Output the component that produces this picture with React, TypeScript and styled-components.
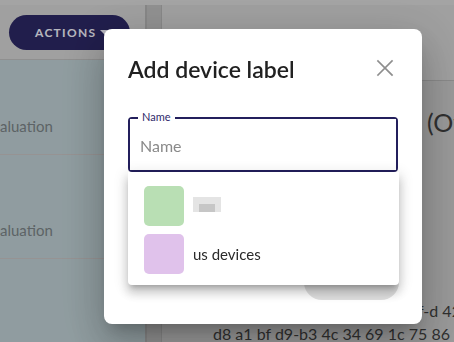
import React from 'react'
import styled, { createGlobalStyle } from 'styled-components'

const GlobalStyle = createGlobalStyle`
    html, body {
        margin: 0;
        padding: 0;
        width: 100%;
        height: 100%;
        overflow: hidden;
        font-family: Lato, "Noto Sans", sans-serif;
    }
    * {
        box-sizing: border-box;
    }
`

interface Label {
    color: string,
    name: string,
    hidden?: boolean
}

const labels: Label[] = [
    { color: '#b9dfb4', name: '', hidden: true },
    { color: '#e0c2eb', name: 'us devices' },
]

const App: React.FC = () => {
    return (
        <>
            <GlobalStyle />
            <StyledPage>
                <div className='left-col'>
                    <div className='topbar'>
                        <button className='actions'>Actions <span className='caret' /></button>
                    </div>
                    <div className='panel'>
                        <div className='row'>aluation</div>
                        <div className='row'>aluation</div>
                        <div className='row' />
                    </div>
                </div>
                <div className='strip' />
                <div className='right-col'>
                    <div className='header' />
                    <h2 className='device-title'>Evaluation device (Offline)</h2>
                    <div className='spacer' />
                    <div className='uuid'>
                        <p>5e 0c 7b 11-90 3a 8f 2c 6b 1f-d 42 c0</p>
                        <p>d8 a1 bf d9-b3 4c 34 69 1c 75 86 -</p>
                    </div>
                </div>
            </StyledPage>
            <Overlay />
            <StyledModal>
                <div className='modal-head'>
                    <h1>Add device label</h1>
                    <button className='close' aria-label='close'>
                        <svg width='28' height='28' viewBox='0 0 24 24' fill='none' stroke='#8e8e8e' strokeWidth='1.5' strokeLinecap='square'>
                            <path d='M18 6 6 18M6 6l12 12' />
                        </svg>
                    </button>
                </div>
                <div className='field'>
                    <label>Name</label>
                    <input placeholder='Name' />
                </div>
                <div className='modal-actions'>
                    <button className='save'>Add</button>
                </div>
                <StyledMenu>
                    {labels.map((l, i) => (
                        <div className='item' key={i}>
                            <span className='swatch' style={{ background: l.color }} />
                            {l.hidden ? <span className='redacted' /> : <span>{l.name}</span>}
                        </div>
                    ))}
                </StyledMenu>
            </StyledModal>
        </>
    )
}

const StyledPage = styled.div`
    display: flex;
    width: 100vw;
    height: 100vh;
    background: #c0c0c0;
    border-top: 5px solid #cecece;

    .left-col {
        width: 147px;
        display: flex;
        flex-direction: column;
        border-right: 2px solid #a9a9a9;
    }

    .topbar {
        height: 55px;
        flex-shrink: 0;
        background: #c8c8c8;
        border-bottom: 1px solid #b3b3b3;
        padding: 10px 0 0 9px;
    }

    .actions {
        width: 121px;
        height: 35px;
        border: none;
        border-radius: 18px;
        background: #2a2660;
        color: #e4e4ee;
        font-family: Lato, sans-serif;
        font-weight: 700;
        font-size: 12px;
        letter-spacing: 1.3px;
        text-transform: uppercase;
        display: flex;
        align-items: center;
        padding-left: 26px;
        gap: 4px;
    }

    .caret {
        width: 0;
        height: 0;
        border-left: 5px solid transparent;
        border-right: 5px solid transparent;
        border-top: 5px solid #e4e4ee;
    }

    .panel {
        flex: 1;
        min-height: 0;
        overflow: hidden;
        background: #b4c4c8;
    }

    .row {
        height: 104px;
        display: flex;
        align-items: flex-end;
        padding-bottom: 18px;
        font-size: 15px;
        line-height: 20px;
        color: #757c80;
        border-bottom: 1px solid #bcb8b8;
    }

    .row:first-child {
        height: 95px;
    }

    .strip {
        width: 15px;
        background: #b6b6b6;
        border-right: 1px solid #aaaaaa;
    }

    .right-col {
        flex: 1;
        display: flex;
        flex-direction: column;
        overflow: hidden;
        color: #3c3c3c;
    }

    .header {
        height: 76px;
        flex-shrink: 0;
        background: #c8c8c8;
        border-bottom: 1px solid #acacac;
    }

    .device-title {
        margin: 26px 0 0 67px;
        font-size: 25px;
        font-weight: 400;
        white-space: nowrap;
    }

    .spacer {
        flex: 1;
    }

    .uuid {
        padding-left: 51px;
        margin-bottom: -3px;

        p {
            margin: 0;
            font-size: 16px;
            line-height: 23px;
            white-space: nowrap;
        }
    }
`

const Overlay = styled.div`
    position: fixed;
    inset: 0;
    background: rgba(0, 0, 0, 0.2);
`

const StyledModal = styled.div`
    position: fixed;
    left: 104px;
    top: 29px;
    width: 318px;
    height: 295px;
    background: #fff;
    border-radius: 8px;
    padding: 24px;
    display: flex;
    flex-direction: column;
    box-shadow: 0 11px 15px -7px rgba(0,0,0,0.2), 0 24px 38px 3px rgba(0,0,0,0.14), 0 9px 46px 8px rgba(0,0,0,0.12);

    .modal-head {
        display: flex;
        align-items: center;
        justify-content: space-between;
        height: 32px;
    }

    h1 {
        margin: 0;
        font-size: 23px;
        font-weight: 600;
        color: #212121;
        line-height: 32px;
    }

    .close {
        width: 28px;
        height: 28px;
        padding: 0;
        margin-right: -1px;
        margin-top: -2px;
        border: none;
        background: none;
        display: flex;
    }

    .field {
        position: relative;
        margin-top: 32px;
        height: 55px;
        border: 2px solid #231f5c;
        border-radius: 4px;

        label {
            position: absolute;
            left: 8px;
            top: -9px;
            padding: 0 4px;
            background: #fff;
            font-size: 11px;
            line-height: 14px;
            color: #2f2a6b;
        }

        input {
            width: 100%;
            height: 100%;
            border: none;
            outline: none;
            padding: 2px 10px 0;
            font-family: Lato, sans-serif;
            font-size: 16px;
            color: #333;
        }

        input::placeholder {
            color: #8a8a8a;
        }
    }

    .modal-actions {
        margin-top: auto;
        display: flex;
        justify-content: flex-end;
    }

    .save {
        width: 95px;
        height: 36px;
        margin-right: -1px;
        padding-bottom: 12px;
        border: none;
        border-radius: 18px;
        background: #e0e0e0;
        color: #a6a6a6;
        font-family: Lato, sans-serif;
        font-weight: 700;
        font-size: 12px;
        letter-spacing: 1.4px;
        text-transform: uppercase;
    }
`

const StyledMenu = styled.div`
    position: absolute;
    left: 24px;
    top: 143px;
    width: 271px;
    height: 113px;
    background: #fff;
    border-radius: 0 0 4px 4px;
    padding-top: 10px;
    box-shadow: 0 5px 5px -3px rgba(0,0,0,0.2), 0 8px 10px 1px rgba(0,0,0,0.14), 0 3px 14px 2px rgba(0,0,0,0.12);

    .item {
        display: flex;
        align-items: center;
        height: 48px;
        padding-left: 16px;
        gap: 9px;
        font-size: 15px;
        color: #2a2a2a;
    }

    .swatch {
        width: 40px;
        height: 40px;
        border-radius: 5px;
    }

    .redacted {
        width: 28px;
        height: 15px;
        margin-top: -4px;
        background:
            linear-gradient(#c6c6c6, #c6c6c6) 6px 7px / 16px 8px no-repeat,
            #e4e4e4;
    }
`

export default App
